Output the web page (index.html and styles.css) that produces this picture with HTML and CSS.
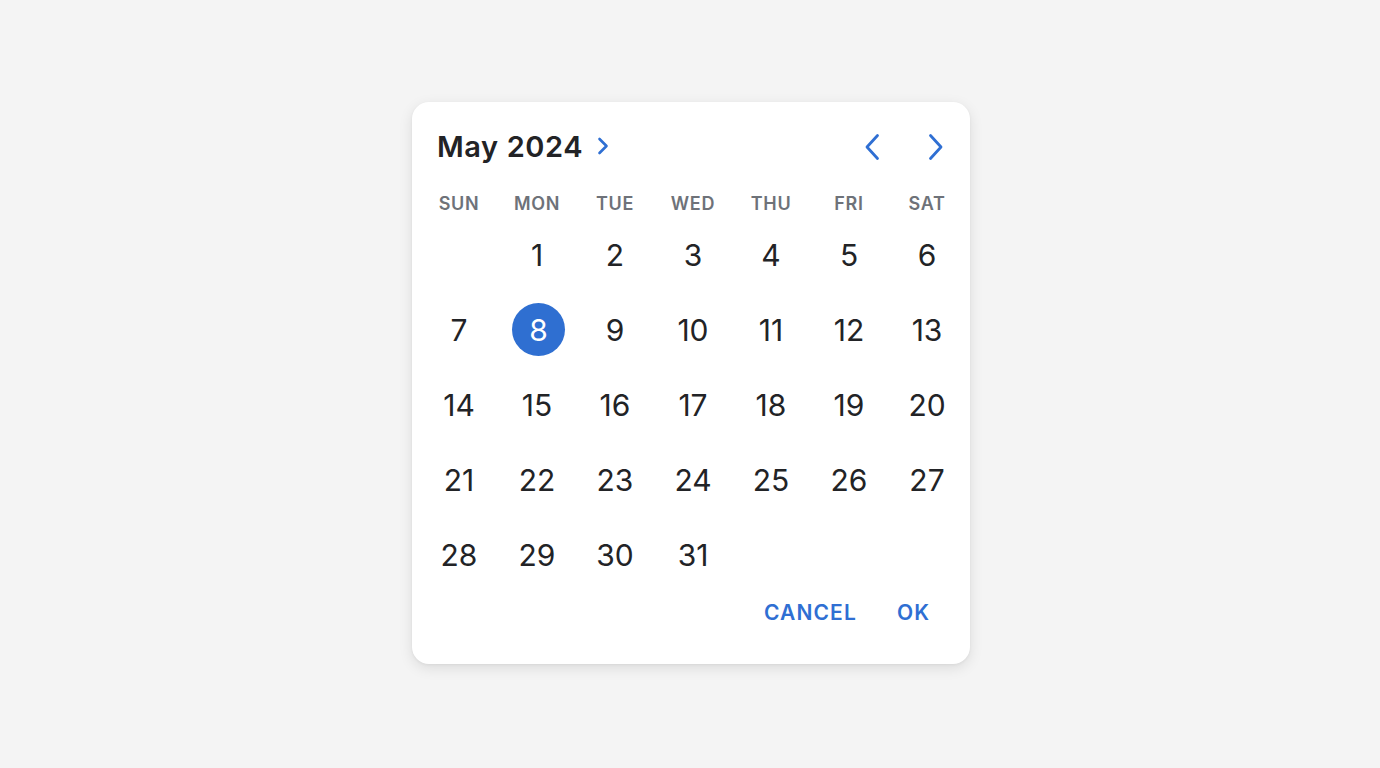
FILE: index.html
```html
<!DOCTYPE html>
<html lang="en">
<head>
<meta charset="utf-8">
<title>Date picker</title>
<link rel="stylesheet" href="styles.css">
</head>
<body>
<div class="stage">
  <div class="picker">
    <div class="header">
      <div class="title">
        <span class="month">May 2024</span>
        <svg class="title-chev" viewBox="0 0 14 20" width="14" height="20"><path d="M3.5 3 L10.5 10 L3.5 17"/></svg>
      </div>
      <div class="nav">
        <svg class="nav-chev" viewBox="0 0 20 28" width="20" height="28"><path d="M15.5 2.5 L5 14 L15.5 25.5"/></svg>
        <svg class="nav-chev" viewBox="0 0 20 28" width="20" height="28"><path d="M4.5 2.5 L15 14 L4.5 25.5"/></svg>
      </div>
    </div>
    <div class="weekdays">
      <span>SUN</span><span>MON</span><span>TUE</span><span>WED</span><span>THU</span><span>FRI</span><span>SAT</span>
    </div>
    <div class="days">
      <span class="day empty"></span>
      <span class="day">1</span><span class="day">2</span><span class="day">3</span><span class="day">4</span><span class="day">5</span><span class="day">6</span>
      <span class="day">7</span><span class="day selected"><span class="dot">8</span></span><span class="day">9</span><span class="day">10</span><span class="day">11</span><span class="day">12</span><span class="day">13</span>
      <span class="day">14</span><span class="day">15</span><span class="day">16</span><span class="day">17</span><span class="day">18</span><span class="day">19</span><span class="day">20</span>
      <span class="day">21</span><span class="day">22</span><span class="day">23</span><span class="day">24</span><span class="day">25</span><span class="day">26</span><span class="day">27</span>
      <span class="day">28</span><span class="day">29</span><span class="day">30</span><span class="day">31</span>
    </div>
    <div class="actions">
      <button class="btn">CANCEL</button>
      <button class="btn">OK</button>
    </div>
  </div>
</div>
</body>
</html>
```
FILE: styles.css
```css
* { box-sizing: border-box; }
html, body { margin: 0; padding: 0; }
body {
  background: #f4f4f4;
  font-family: Inter, "Noto Sans", "Liberation Sans", sans-serif;
  color: #222326;
}
.stage {
  width: 1380px;
  height: 768px;
  padding-top: 102px;
  padding-left: 412px;
}
.picker {
  width: 558px;
  height: 562px;
  background: #ffffff;
  border-radius: 17px;
  box-shadow: 0 4px 14px rgba(0, 0, 0, 0.10), 0 1px 3px rgba(0, 0, 0, 0.05);
  padding: 24px 4px 32px 8px;
  display: flex;
  flex-direction: column;
}
.header {
  height: 42px;
  display: flex;
  align-items: center;
  justify-content: space-between;
  padding: 0 20px 0 17px;
}
.title {
  display: flex;
  align-items: center;
  gap: 13px;
}
.month {
  font-size: 29px;
  font-weight: 600;
  letter-spacing: 0.6px;
  color: #222326;
}
.title-chev path, .nav-chev path {
  fill: none;
  stroke: #2f6fd3;
  stroke-linecap: round;
  stroke-linejoin: round;
}
.title-chev path { stroke-width: 2.6; }
.title-chev { margin-top: -2px; }
.nav-chev path { stroke-width: 2.8; }
.nav {
  display: flex;
  align-items: center;
  gap: 44px;
}
.weekdays {
  margin-top: 22px;
  height: 28px;
  display: grid;
  grid-template-columns: repeat(7, 78px);
  align-items: center;
  justify-items: center;
  font-size: 18px;
  font-weight: 600;
  letter-spacing: 0.7px;
  color: #6e7279;
}
.days {
  margin-top: -0.5px;
  display: grid;
  grid-template-columns: repeat(7, 78px);
  grid-auto-rows: 75px;
  align-items: center;
  justify-items: center;
  font-size: 30px;
  font-weight: 400;
  color: #222326;
}
.day {
  display: flex;
  align-items: center;
  justify-content: center;
}
.dot {
  width: 53px;
  height: 53px;
  border-radius: 50%;
  background: #2f6fd1;
  color: #ffffff;
  display: flex;
  align-items: center;
  justify-content: center;
  margin-left: 3px;
}
.actions {
  margin-top: auto;
  height: 40px;
  display: flex;
  justify-content: flex-end;
  align-items: center;
  gap: 24px;
  padding-right: 28px;
}
.btn {
  border: none;
  background: none;
  font-family: Inter, "Noto Sans", "Liberation Sans", sans-serif;
  font-size: 21px;
  font-weight: 600;
  letter-spacing: 1.1px;
  color: #2f6fd3;
  padding: 0 8px;
  height: 40px;
}
```
